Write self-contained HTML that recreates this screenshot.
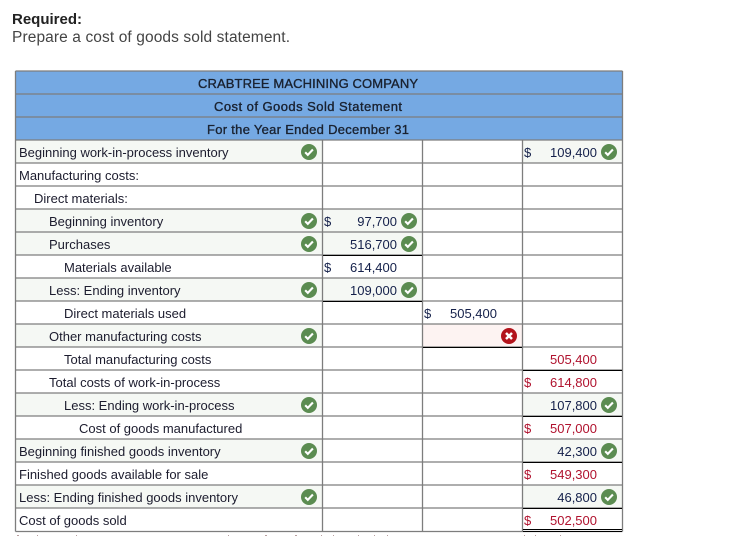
<!DOCTYPE html>
<html>
<head>
<meta charset="utf-8">
<style>
html,body{margin:0;padding:0;background:#fff;width:747px;height:539px;overflow:hidden}
svg{display:block;position:absolute;left:0;top:0}
text{font-family:"Liberation Sans",Arial,sans-serif;font-size:13px;fill:#1c1c2e}
.h{font-size:13px;font-weight:400;fill:#1a2230;stroke:#1a2230;stroke-width:.35px}
.n{text-anchor:end;fill:#14204a}
.r{text-anchor:end;fill:#b0122e}
.d{fill:#14204a}
.dr{fill:#b0122e}
</style>
</head>
<body>
<svg width="747" height="539" viewBox="0 0 747 539" xmlns="http://www.w3.org/2000/svg">
<defs>
<g id="ok"><circle r="8" fill="#5b8c51"/><path d="M-3.8 .3L-1.2 2.9L3.9-2.5" fill="none" stroke="#fff" stroke-width="2.1"/></g>
<g id="no"><circle r="8" fill="#b3141c"/><path d="M-3-3L3 3M3-3L-3 3" fill="none" stroke="#fff" stroke-width="2.5"/></g>
</defs>

<text x="12" y="24" style="font-size:15px;font-weight:700;fill:#222">Required:</text>
<text x="12" y="42" textLength="278" lengthAdjust="spacing" style="font-size:15.5px;fill:#444">Prepare a cost of goods sold statement.</text>

<!-- header fill -->
<rect x="16" y="71" width="607" height="69" fill="#75a9e3"/>

<!-- cell fills -->
<g fill="#f5f8f4">
<rect x="16" y="140" width="306" height="23"/>
<rect x="16" y="209" width="306" height="46"/>
<rect x="16" y="278" width="306" height="23"/>
<rect x="16" y="324" width="306" height="23"/>
<rect x="16" y="393" width="306" height="23"/>
<rect x="16" y="439" width="306" height="23"/>
<rect x="16" y="485" width="306" height="23"/>
<rect x="323" y="209" width="99" height="46"/>
<rect x="323" y="278" width="99" height="23"/>
<rect x="523" y="140" width="99" height="23"/>
<rect x="523" y="393" width="99" height="23"/>
<rect x="523" y="439" width="99" height="23"/>
<rect x="523" y="485" width="99" height="23"/>
</g>
<rect x="423" y="324" width="99" height="23" fill="#fdf3f2"/>

<!-- grid -->
<g stroke="#7d7d7d" stroke-width="1.3" fill="none">
<path d="M15.5 71H622.5M15.5 94H622.5M15.5 117H622.5M15.5 140H622.5M15.5 163H622.5M15.5 186H622.5M15.5 209H622.5M15.5 232H622.5M15.5 255H622.5M15.5 278H622.5M15.5 301H622.5M15.5 324H622.5M15.5 347H622.5M15.5 370H622.5M15.5 393H622.5M15.5 416H622.5M15.5 439H622.5M15.5 462H622.5M15.5 485H622.5M15.5 508H622.5M15.5 531.5H622.5"/>
<path d="M15.5 71V531.5M622.5 71V531.5M322.5 140V531.5M422.5 140V531.5M522.5 140V531.5"/>
</g>

<!-- black rules -->
<g stroke="#000" stroke-width="1" fill="none">
<path d="M323 255.5H422M323 301.5H422M423 347.5H522M523 370.5H622M523 416.5H622M523 462.5H622M523 508.5H622M523 529.5H622M523 531.5H622"/>
</g>

<!-- header text -->
<text class="h" x="198" y="88" textLength="220" lengthAdjust="spacing">CRABTREE MACHINING COMPANY</text>
<text class="h" x="214" y="111" textLength="188" lengthAdjust="spacing">Cost of Goods Sold Statement</text>
<text class="h" x="207" y="134" textLength="202" lengthAdjust="spacing">For the Year Ended December 31</text>

<!-- labels -->
<text x="19" y="157">Beginning work-in-process inventory</text>
<text x="19" y="180">Manufacturing costs:</text>
<text x="34" y="203">Direct materials:</text>
<text x="49" y="226">Beginning inventory</text>
<text x="49" y="249">Purchases</text>
<text x="64" y="272">Materials available</text>
<text x="49" y="295">Less: Ending inventory</text>
<text x="64" y="318">Direct materials used</text>
<text x="49" y="341">Other manufacturing costs</text>
<text x="64" y="364">Total manufacturing costs</text>
<text x="49" y="387">Total costs of work-in-process</text>
<text x="64" y="410">Less: Ending work-in-process</text>
<text x="79" y="433">Cost of goods manufactured</text>
<text x="19" y="456">Beginning finished goods inventory</text>
<text x="19" y="479">Finished goods available for sale</text>
<text x="19" y="502">Less: Ending finished goods inventory</text>
<text x="19" y="525">Cost of goods sold</text>

<!-- column 1 -->
<text class="d" x="324" y="226">$</text><text class="n" x="397" y="226">97,700</text>
<text class="n" x="397" y="249">516,700</text>
<text class="d" x="324" y="272">$</text><text class="n" x="397" y="272">614,400</text>
<text class="n" x="397" y="295">109,000</text>

<!-- column 2 -->
<text class="d" x="424" y="318">$</text><text class="n" x="497" y="318">505,400</text>

<!-- column 3 -->
<text class="d" x="524" y="157">$</text><text class="n" x="597" y="157">109,400</text>
<text class="r" x="597" y="364">505,400</text>
<text class="dr" x="524" y="387">$</text><text class="r" x="597" y="387">614,800</text>
<text class="n" x="597" y="410">107,800</text>
<text class="dr" x="524" y="433">$</text><text class="r" x="597" y="433">507,000</text>
<text class="n" x="597" y="456">42,300</text>
<text class="dr" x="524" y="479">$</text><text class="r" x="597" y="479">549,300</text>
<text class="n" x="597" y="502">46,800</text>
<text class="dr" x="524" y="525">$</text><text class="r" x="597" y="525">502,500</text>

<!-- icons -->
<use href="#ok" x="309" y="152"/>
<use href="#ok" x="309" y="221"/>
<use href="#ok" x="309" y="244"/>
<use href="#ok" x="309" y="290"/>
<use href="#ok" x="309" y="336"/>
<use href="#ok" x="309" y="405"/>
<use href="#ok" x="309" y="451"/>
<use href="#ok" x="309" y="497"/>
<use href="#ok" x="409" y="221"/>
<use href="#ok" x="409" y="244"/>
<use href="#ok" x="409" y="290"/>
<use href="#ok" x="609" y="152"/>
<use href="#ok" x="609" y="405"/>
<use href="#ok" x="609" y="451"/>
<use href="#ok" x="609" y="497"/>
<use href="#no" x="509" y="336"/>

<!-- clipped next line specks -->
<g fill="#b9a0a0">
<rect x="17" y="535" width="2" height="1"/><rect x="37" y="535" width="1" height="1"/><rect x="76" y="535" width="1" height="1"/><rect x="228" y="535" width="1" height="1"/><rect x="265" y="535" width="2" height="1"/><rect x="295" y="535" width="2" height="1"/><rect x="321" y="535" width="1" height="1"/><rect x="333" y="535" width="1" height="1"/><rect x="358" y="535" width="1" height="1"/><rect x="374" y="535" width="1" height="1"/><rect x="387" y="535" width="1" height="1"/><rect x="524" y="535" width="1" height="1"/><rect x="535" y="535" width="1" height="1"/><rect x="560" y="535" width="1" height="1"/>
</g>
</svg>
</body>
</html>
